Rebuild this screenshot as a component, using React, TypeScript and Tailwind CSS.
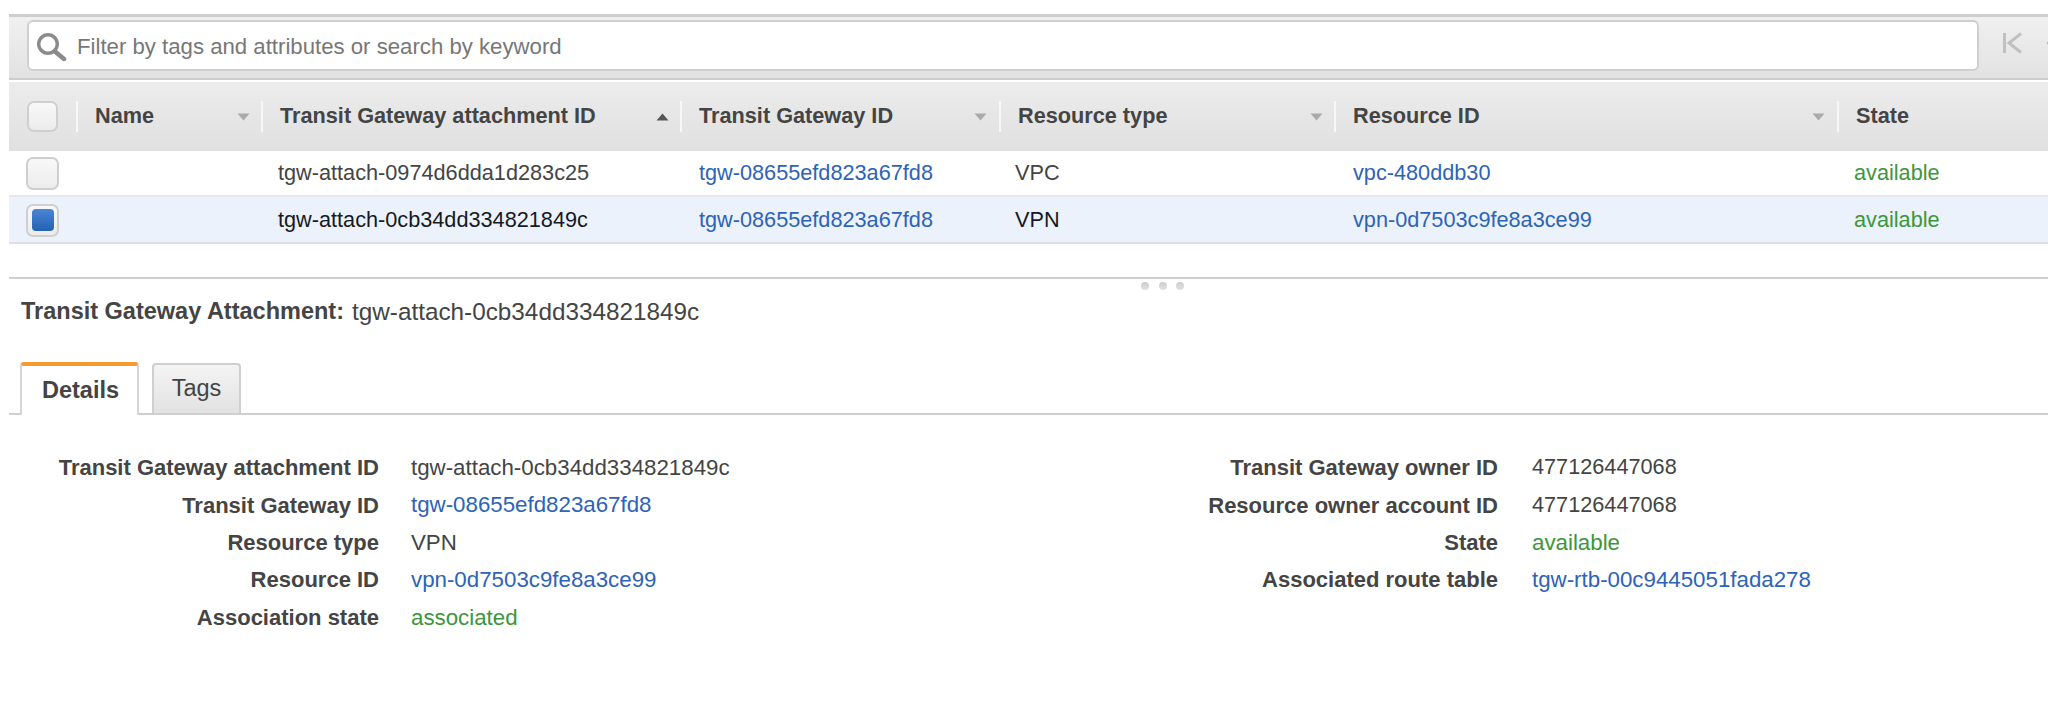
import React from 'react';
import { ChevronLeft } from 'lucide-react';

const Caret = ({ up }: { up?: boolean }) => (
  <svg width="13" height="8" viewBox="0 0 13 8" className="shrink-0">
    {up ? <path d="M6.5 0.5L12.5 7.5H0.5Z" fill="#555" /> : <path d="M0.5 0.5H12.5L6.5 7.5Z" fill="#aaa" />}
  </svg>
);

const Check = ({ checked, header }: { checked?: boolean; header?: boolean }) => (
  <div
    className={`${header ? 'w-[31px] h-[31px]' : 'w-[33px] h-[33px]'} flex items-center justify-center rounded-[7px] border-2 border-[#cfcfcf] bg-gradient-to-b from-[#f8f8f8] to-[#ececec]`}
  >
    {checked && <div className="w-[22px] h-[22px] rounded-[4px] bg-gradient-to-b from-[#4a86d4] to-[#2361b3]" />}
  </div>
);

const columns = [
  { name: 'Name', width: 'w-[185px]', caretLeft: 'pr-[11px]' },
  { name: 'Transit Gateway attachment ID', width: 'w-[419px]', up: true, caretLeft: 'pr-[11px]' },
  { name: 'Transit Gateway ID', width: 'w-[319px]', caretLeft: 'pr-[12px]' },
  { name: 'Resource type', width: 'w-[335px]', caretLeft: 'pr-[11px]' },
  { name: 'Resource ID', width: 'w-[503px]', caretLeft: 'pr-[12px]' },
];

const Row = ({ attachment, type, resource, selected }: { attachment: string; type: string; resource: string; selected?: boolean }) => (
  <div className={`flex items-center border-b-2 text-[21.7px] ${selected ? 'h-[47px] pt-[1px] bg-[#ebf2fb] border-[#dcdfe3] text-[#16191f]' : 'h-[46px] bg-white border-[#e3e6ea] text-[#444]'}`}>
    <div className="w-[67px] pl-[17px]">
      <Check checked={selected} />
    </div>
    <div className="w-[185px]" />
    <div className="w-[419px] pl-[17px]">{attachment}</div>
    <div className="w-[319px] pl-[19px] text-[#2d63b8]">tgw-08655efd823a67fd8</div>
    <div className="w-[335px] pl-[16px]">{type}</div>
    <div className="w-[504px] pl-[19px] text-[#2d63b8]">{resource}</div>
    <div className="pl-[16px] text-[#3d963b]">available</div>
  </div>
);

export default function App() {
  return (
    <div className="w-[2048px] h-[712px] overflow-hidden bg-white pl-[9px] pt-[14px] font-['Liberation_Sans',Arial,sans-serif]">
      {/* Filter bar */}
      <div className="flex h-[66px] w-[2200px] items-start border-t-[3px] border-b-2 border-[#cdcdcd] bg-gradient-to-b from-[#f0f0f0] to-[#e2e2e2] pl-[18px] pt-[3px]">
        <div className="flex h-[51px] w-[1952px] items-center rounded-[6px] border-2 border-[#cfcfcf] bg-white pl-[8px]">
          <svg width="32" height="30" viewBox="0 0 32 30" className="shrink-0">
            <circle cx="11" cy="13" r="9.3" fill="none" stroke="#8b8b8b" strokeWidth="3.4" />
            <path d="M18 20.5L27 28" stroke="#8b8b8b" strokeWidth="4.6" strokeLinecap="round" />
          </svg>
          <span className="ml-[8px] pt-[2px] text-[22.2px] text-[#777]">Filter by tags and attributes or search by keyword</span>
        </div>
        <svg width="24" height="24" viewBox="0 0 24 24" className="ml-[22px] mt-[11px] shrink-0">
          <path d="M3.5 2V22M20 2.5L8 12L20 21.5" fill="none" stroke="#c0c0c0" strokeWidth="3" />
        </svg>
        <ChevronLeft size={20} className="ml-[15px] mt-[13px] text-[#bbb]" />
      </div>

      {/* Table */}
      <div className="mt-[2px] flex h-[69px] items-center bg-gradient-to-b from-[#ececec] to-[#e0e0e0] text-[21.7px] font-bold text-[#444]">
        <div className="flex h-[31px] w-[67px] items-center pl-[18px]">
          <Check header />
        </div>
        {columns.map(col => (
          <div key={col.name} className={`${col.width} flex h-[31px] items-center justify-between border-l-2 border-[#f7f7f7] pl-[17px] ${col.caretLeft}`}>
            <span>{col.name}</span>
            <Caret up={col.up} />
          </div>
        ))}
        <div className="flex h-[31px] items-center border-l-2 border-[#f7f7f7] pl-[17px]">State</div>
      </div>
      <Row attachment="tgw-attach-0974d6dda1d283c25" type="VPC" resource="vpc-480ddb30" />
      <Row attachment="tgw-attach-0cb34dd334821849c" type="VPN" resource="vpn-0d7503c9fe8a3ce99" selected />

      {/* Split pane handle */}
      <div className="relative mt-[33px] h-[2px] bg-[#cfcfcf]">
        <div className="absolute left-[1132px] top-[5px] flex gap-[9.5px]">
          <div className="h-[8px] w-[8px] rounded-full bg-gradient-to-b from-[#cccccc] to-[#e2e2e2]" />
          <div className="h-[8px] w-[8px] rounded-full bg-gradient-to-b from-[#cccccc] to-[#e2e2e2]" />
          <div className="h-[8px] w-[8px] rounded-full bg-gradient-to-b from-[#cccccc] to-[#e2e2e2]" />
        </div>
      </div>

      <div className="mt-[16px] flex h-[34px] items-center pl-[12px] text-[#444]">
        <span className="text-[23.5px] font-bold">Transit Gateway Attachment:</span>
        <span className="ml-[8px] text-[24.3px]">tgw-attach-0cb34dd334821849c</span>
      </div>

      {/* Tabs */}
      <div className="mt-[33px] flex h-[53px] items-end border-b-2 border-[#cfcfcf] pl-[11px] text-[23.5px] text-[#444]">
        <div className="-mb-[2px] flex h-[53px] w-[119px] items-center justify-center rounded-t-[4px] border-x-2 border-t-4 border-x-[#d5d5d5] border-t-[#f79a2d] bg-white pl-[2px] font-bold">
          Details
        </div>
        <div className="ml-[13px] flex h-[50px] w-[89px] items-center justify-center rounded-t-[4px] border-x-2 border-t-2 border-[#cfcfcf] bg-gradient-to-b from-[#f4f4f4] to-[#e2e2e2]">
          Tags
        </div>
      </div>

      {/* Detail columns */}
      <div className="mt-[34px] flex text-[22px]">
        <div className="w-[800px]">
          <div className="grid grid-cols-[370px_1fr] gap-x-[32px]">
            {[
              ['Transit Gateway attachment ID', 'tgw-attach-0cb34dd334821849c', 'text-[#444]'],
              ['Transit Gateway ID', 'tgw-08655efd823a67fd8', 'text-[#2d63b8]'],
              ['Resource type', 'VPN', 'text-[#444]'],
              ['Resource ID', 'vpn-0d7503c9fe8a3ce99', 'text-[#2d63b8]'],
              ['Association state', 'associated', 'text-[#3d963b]'],
            ].map(([label, value, color]) => (
              <React.Fragment key={label}>
                <div className="flex h-[37.4px] items-center justify-end font-bold text-[#444]">{label}</div>
                <div className={`flex h-[37.4px] items-center text-[22.3px] ${color}`}>{value}</div>
              </React.Fragment>
            ))}
          </div>
        </div>
        <div className="ml-[189px] grid grid-cols-[500px_1fr] content-start gap-x-[34px]">
          {[
            ['Transit Gateway owner ID', '477126447068', 'text-[#444] text-[21.7px]'],
            ['Resource owner account ID', '477126447068', 'text-[#444] text-[21.7px]'],
            ['State', 'available', 'text-[#3d963b] text-[22.3px]'],
            ['Associated route table', 'tgw-rtb-00c9445051fada278', 'text-[#2d63b8] text-[22.3px]'],
          ].map(([label, value, color]) => (
            <React.Fragment key={label}>
              <div className="flex h-[37.4px] items-center justify-end font-bold text-[#444]">{label}</div>
              <div className={`flex h-[37.4px] items-center ${color}`}>{value}</div>
            </React.Fragment>
          ))}
        </div>
      </div>
    </div>
  );
}
